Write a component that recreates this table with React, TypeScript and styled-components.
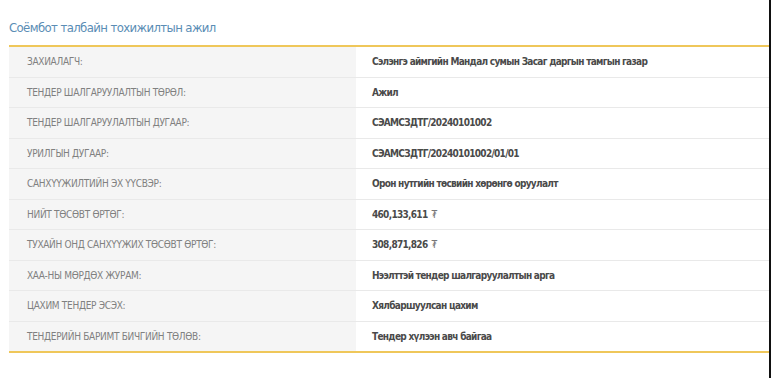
import React from "react";
import styled, { createGlobalStyle } from "styled-components";

const Global = createGlobalStyle`
  html, body { margin: 0; padding: 0; background: #fff; }
  body { font-family: "DejaVu Sans Condensed", "Liberation Sans", sans-serif; }
`;

const Page = styled.div`
  width: 771px;
  height: 378px;
  box-sizing: border-box;
  padding: 18px 0 0 9px;
  border-right: 2px solid #111;
  background: #fff;
`;

const Title = styled.h3`
  margin: 0 0 8px 0;
  font-size: 13px;
  font-weight: 400;
  letter-spacing: -0.6px;
  color: #5a8db5;
  line-height: 19px;
`;

const Table = styled.div`
  display: grid;
  grid-template-columns: 347px 1fr;
  border-top: 2px solid #efc75a;
  border-bottom: 2px solid #efc75a;
`;

const Cell = styled.div<{ $last?: boolean }>`
  height: 29.5px;
  display: flex;
  align-items: center;
  white-space: nowrap;
  border-bottom: ${(p) => (p.$last ? "none" : "1px solid #e9e9e9")};
`;

const Label = styled(Cell)`
  background: #f5f5f5;
  padding-left: 18px;
  font-size: 10px;
  letter-spacing: -0.3px;
  color: #808080;
  text-transform: uppercase;
`;

const Value = styled(Cell)`
  background: #fff;
  padding-left: 16px;
  font-size: 10px;
  letter-spacing: -0.7px;
  font-weight: 700;
  color: #4a4a4a;
`;

const Tugrik = styled.span`
  font-weight: 400;
  color: #777;
  margin-left: 4px;
`;

const rows: [string, React.ReactNode][] = [
  ["ЗАХИАЛАГЧ:", "Сэлэнгэ аймгийн Мандал сумын Засаг даргын тамгын газар"],
  ["ТЕНДЕР ШАЛГАРУУЛАЛТЫН ТӨРӨЛ:", "Ажил"],
  ["ТЕНДЕР ШАЛГАРУУЛАЛТЫН ДУГААР:", "СЭАМСЗДТГ/20240101002"],
  ["УРИЛГЫН ДУГААР:", "СЭАМСЗДТГ/20240101002/01/01"],
  ["САНХҮҮЖИЛТИЙН ЭХ ҮҮСВЭР:", "Орон нутгийн төсвийн хөрөнгө оруулалт"],
  ["НИЙТ ТӨСӨВТ ӨРТӨГ:", <>460,133,611<Tugrik>₮</Tugrik></>],
  ["ТУХАЙН ОНД САНХҮҮЖИХ ТӨСӨВТ ӨРТӨГ:", <>308,871,826<Tugrik>₮</Tugrik></>],
  ["ХАА-НЫ МӨРДӨХ ЖУРАМ:", "Нээлттэй тендер шалгаруулалтын арга"],
  ["ЦАХИМ ТЕНДЕР ЭСЭХ:", "Хялбаршуулсан цахим"],
  ["ТЕНДЕРИЙН БАРИМТ БИЧГИЙН ТӨЛӨВ:", "Тендер хүлээн авч байгаа"],
];

export default function App() {
  return (
    <>
      <Global />
      <Page>
        <Title>Соёмбот талбайн тохижилтын ажил</Title>
        <Table>
          {rows.map(([l, v], i) => (
            <React.Fragment key={i}>
              <Label $last={i === rows.length - 1}>{l}</Label>
              <Value $last={i === rows.length - 1}>{v}</Value>
            </React.Fragment>
          ))}
        </Table>
      </Page>
    </>
  );
}
